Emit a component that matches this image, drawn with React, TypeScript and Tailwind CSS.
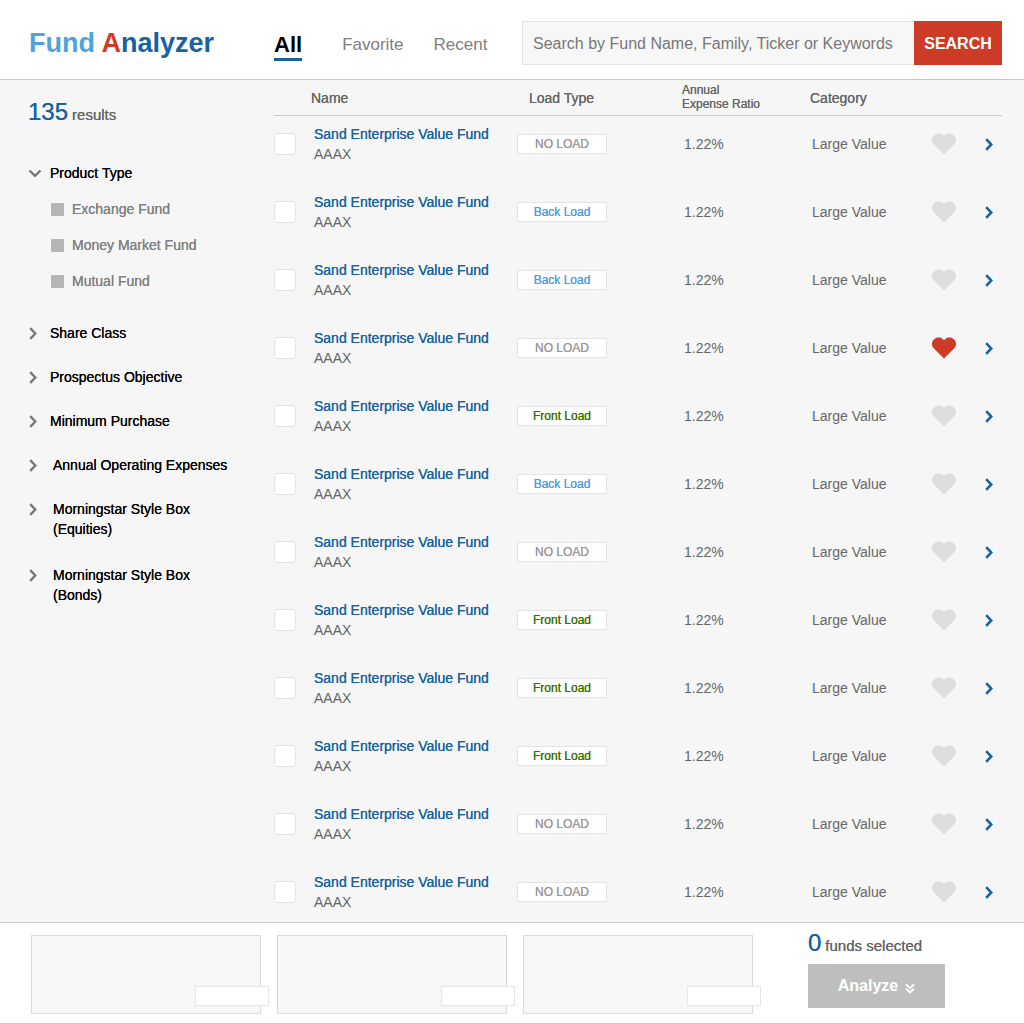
import { useState } from "react";

type Load = "none" | "back" | "front";

const loads: Load[] = [
  "none", "back", "back", "none", "front", "back",
  "none", "front", "front", "front", "none", "none",
];

const loadStyle: Record<Load, { label: string; color: string }> = {
  none: { label: "NO LOAD", color: "text-[#999999]" },
  back: { label: "Back Load", color: "text-[#4a9fdb]" },
  front: { label: "Front Load", color: "text-[#3b7300]" },
};

const filters = [
  { label: "Share Class", pad: "pl-3" },
  { label: "Prospectus Objective", pad: "pl-3" },
  { label: "Minimum Purchase", pad: "pl-3" },
  { label: "Annual Operating Expenses", pad: "pl-[15px]" },
  { label: "Morningstar Style Box (Equities)", pad: "pl-[15px] pb-0.5" },
  { label: "Morningstar Style Box (Bonds)", pad: "pl-[15px]" },
];

const medium = "[text-shadow:0_0_0_currentColor]";

function Heart() {
  return (
    <svg width="24" height="22" viewBox="0 0 24 22" fill="currentColor" aria-hidden="true">
      <path d="M12 21.500 1.900 11.600C-.6 9-.6 5 1.700 2.600 4.300 0 8.300 0 10.600 1.900L12 3.100l1.400-1.200c2.300-1.900 6.300-1.900 8.900.7 2.300 2.400 2.300 6.400-.2 9z" />
    </svg>
  );
}

function ChevronRight({ width }: { width: number }) {
  return (
    <svg width="8" height="13" viewBox="0 0 8 13" fill="none" stroke="currentColor" strokeWidth={width} aria-hidden="true">
      <path d="M1.200 1.200 6.300 6.500 1.200 11.800" />
    </svg>
  );
}

function Header() {
  return (
    <header className="flex h-20 items-start border-b border-[#c9c9c9] bg-white pr-[22px]">
      <h1 className="w-[274px] shrink-0 pt-[27px] pl-[29px] text-[27px] leading-8 font-bold">
        <span className="text-[#4fa3dd]">Fund </span>
        <span className="text-[#cd3b27]">A</span>
        <span className="text-[#1763a2]">nalyzer</span>
      </h1>
      <nav className="flex flex-1 items-start pt-[31px] text-[17px] leading-7 text-[#808080]">
        <a href="#all" className="border-b-[3px] border-[#1763a2] text-[22px] leading-[27px] font-bold text-black">All</a>
        <a href="#favorite" className="ml-10">Favorite</a>
        <a href="#recent" className="ml-[30px]">Recent</a>
      </nav>
      <form className="mt-[21px] flex h-11 w-[480px] text-base" onSubmit={(e) => e.preventDefault()}>
        <input
          type="text"
          aria-label="Search funds"
          placeholder="Search by Fund Name, Family, Ticker or Keywords"
          className="min-w-0 flex-1 border border-r-0 border-[#e3e3e3] bg-[#f7f7f7] px-2.5 pt-0.5 text-[#555555] outline-none placeholder:text-[#777777]"
        />
        <button type="submit" className="w-[88px] bg-[#cd3b27] pt-0.5 font-bold text-white">SEARCH</button>
      </form>
    </header>
  );
}

function Sidebar() {
  return (
    <aside className="w-[274px] shrink-0 pt-4 pl-7 text-sm leading-5">
      <p className="flex items-baseline gap-1 text-[15px] leading-5 text-[#666666]">
        <span className={`text-2xl leading-8 text-[#1763a2] ${medium}`}>135</span>
        <span className={medium}>results</span>
      </p>
      <button type="button" aria-expanded="true" className="mt-[35px] flex items-center text-black">
        <svg width="14" height="9" viewBox="0 0 14 9" fill="none" stroke="#777777" strokeWidth="2.400" aria-hidden="true">
          <path d="M1.500 1.500 7 6.800l5.500-5.300" />
        </svg>
        <span className={`pl-2 ${medium}`}>Product Type</span>
      </button>
      <ul className="mt-2 pl-[23px]">
        {["Exchange Fund", "Money Market Fund", "Mutual Fund"].map((name) => (
          <li key={name}>
            <label className="flex h-9 items-center gap-2 text-[#808080]">
              <input type="checkbox" className="size-[13px] appearance-none rounded-[1px] bg-[#b5b5b5] checked:bg-[#1763a2]" />
              <span className={medium}>{name}</span>
            </label>
          </li>
        ))}
      </ul>
      <ul className="mt-6 flex flex-col gap-6">
        {filters.map((f) => (
          <li key={f.label}>
            <button type="button" aria-expanded="false" className="flex items-start pl-px text-left text-black">
              <span className="flex h-5 items-center text-[#777777]"><ChevronRight width={2.4} /></span>
              <span className={`ml-px ${medium} ${f.pad}`}>
                {f.label.split(" (").map((part, i) => (
                  <span key={part} className={i ? "block" : ""}>{i ? `(${part}` : part}</span>
                ))}
              </span>
            </button>
          </li>
        ))}
      </ul>
    </aside>
  );
}

function FundTable() {
  const [favorites, setFavorites] = useState<number[]>([3]);
  const toggle = (i: number) =>
    setFavorites((f) => (f.includes(i) ? f.filter((n) => n !== i) : [...f, i]));
  const th = `h-9 border-b border-[#c9c9c9] font-normal ${medium}`;

  return (
    <table className="w-full table-fixed border-separate border-spacing-0 text-left text-sm leading-5 text-[#666666]">
      <colgroup>
        <col className="w-9" />
        <col />
        <col className="w-[165px]" />
        <col className="w-32" />
        <col className="w-[122px]" />
        <col className="w-[52px]" />
        <col className="w-[18px]" />
      </colgroup>
      <thead>
        <tr>
          <th className={th} />
          <th className={`${th} pl-px`}>Name</th>
          <th className={`${th} pl-3`}>Load Type</th>
          <th className={`${th} pb-0.5 text-xs leading-[14px]`}>Annual<br />Expense Ratio</th>
          <th className={th}>Category</th>
          <th className={th} />
          <th className={th} />
        </tr>
      </thead>
      <tbody>
        {loads.map((load, i) => (
          <tr key={i} className="[&>td]:pt-2 [&>td]:pb-5 last:[&>td]:pb-2.5">
            <td>
              <input
                type="checkbox"
                aria-label={`Select fund ${i + 1}`}
                className="block size-[22px] appearance-none rounded-[3px] border border-[#e3e3e3] bg-white checked:bg-[#1763a2]"
              />
            </td>
            <td className="pl-1">
              <a href="#fund" className={`block text-[#1763a2] ${medium}`}>Sand Enterprise Value Fund</a>
              <span className="block">AAAX</span>
            </td>
            <td>
              <span className={`block h-5 w-[90px] border border-[#e3e3e3] bg-white text-center text-xs leading-[18px] ${medium} ${loadStyle[load].color}`}>
                {loadStyle[load].label}
              </span>
            </td>
            <td className="pl-0.5">1.22%</td>
            <td className="pl-0.5">Large Value</td>
            <td>
              <button
                type="button"
                aria-label="Favorite"
                aria-pressed={favorites.includes(i)}
                onClick={() => toggle(i)}
                className={favorites.includes(i) ? "block text-[#cd3b27]" : "block text-[#dddddd]"}
              >
                <Heart />
              </button>
            </td>
            <td>
              <button type="button" aria-label="Open fund" className="block pl-px text-[#1763a2]">
                <ChevronRight width={2.6} />
              </button>
            </td>
          </tr>
        ))}
      </tbody>
    </table>
  );
}

function CompareBar() {
  return (
    <footer className="flex border-y border-[#c9c9c9] bg-white pt-3 pb-[9px] pl-[31px]">
      <div className="mr-[55px] grid flex-1 grid-cols-3 gap-4">
        {[0, 1, 2].map((n) => (
          <div key={n} className="relative h-[79px] border border-[#dadada] bg-[#f7f7f7]">
            <div className="absolute -right-[9px] bottom-[7px] h-5 w-[74px] border border-[#e6e6e6] bg-white" />
          </div>
        ))}
      </div>
      <div className="-mt-2 w-[216px] shrink-0">
        <p className="flex items-baseline gap-1 text-[15px] leading-5 text-[#666666]">
          <span className={`text-2xl leading-8 text-[#1763a2] ${medium}`}>0</span>
          <span className={medium}>funds selected</span>
        </p>
        <button type="button" className="mt-[5px] flex h-11 w-[137px] items-center justify-center gap-[7px] bg-[#bebebe] font-bold text-white">
          Analyze
          <svg width="10" height="11" viewBox="0 0 10 11" fill="none" stroke="currentColor" strokeWidth="2" className="mt-1" aria-hidden="true">
            <path d="M1 1.500 5 5l4-3.500M1 5.800l4 3.500 4-3.500" />
          </svg>
        </button>
      </div>
    </footer>
  );
}

export default function App() {
  return (
    <div className="min-h-screen bg-[#f6f6f6] font-['Liberation_Sans',Arial,sans-serif]">
      <Header />
      <div className="flex">
        <Sidebar />
        <main className="min-w-0 flex-1 pr-[22px]">
          <FundTable />
        </main>
      </div>
      <CompareBar />
    </div>
  );
}
